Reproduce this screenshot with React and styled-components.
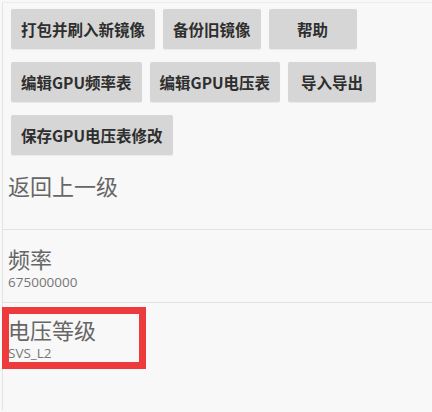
import styled, { createGlobalStyle } from 'styled-components';

const GlobalStyle = createGlobalStyle`
  html, body {
    margin: 0;
    background: #f8f8f8;
    font-family: "Noto Sans CJK SC", "Noto Sans", sans-serif;
  }
`;

const Page = styled.div`
  margin: 2px 0 0 2px;
  min-height: 408px;
  border-left: 1px solid #e3e3e3;
  border-top: 1px solid #ededed;
  box-sizing: border-box;
`;

const ButtonArea = styled.div`
  display: flex;
  flex-direction: column;
  gap: 13px;
  padding: 6px 0 0 8px;
`;

const ButtonRow = styled.div`
  display: flex;
  gap: 8px;
`;

const Button = styled.button`
  height: 40px;
  min-width: 88px;
  padding: 0 10px;
  border: none;
  border-radius: 2px;
  background: #d6d6d6;
  color: #2e2e2e;
  font-family: inherit;
  font-size: 15.5px;
  font-weight: 700;
  box-shadow: 0 1px 1px rgba(0, 0, 0, 0.06);
`;

const Item = styled.div`
  position: relative;
  padding: ${(p) => p.$pad || '13px 0 11px 5px'};
  border-bottom: ${(p) => (p.$last ? 'none' : '1px solid #e2e2e2')};
`;

const Title = styled.div`
  color: #666;
  font-size: 22px;
  line-height: 30px;
`;

const Value = styled.div`
  color: #777;
  font-family: "Open Sans", "Noto Sans", sans-serif;
  font-size: 13.5px;
  line-height: 18px;
`;

const Highlight = styled.div`
  position: absolute;
  left: -1px;
  top: 4px;
  width: 130px;
  height: 48px;
  border: 7px solid #ec3a3d;
  pointer-events: none;
`;

const rows = [
  ['打包并刷入新镜像', '备份旧镜像', '帮助'],
  ['编辑GPU频率表', '编辑GPU电压表', '导入导出'],
  ['保存GPU电压表修改'],
];

const App = () => (
  <>
    <GlobalStyle />
    <Page>
      <ButtonArea>
        {rows.map((row, i) => (
          <ButtonRow key={i}>
            {row.map((label) => (
              <Button key={label}>{label}</Button>
            ))}
          </ButtonRow>
        ))}
      </ButtonArea>
      <Item $pad="15px 0 29px 5px">
        <Title>返回上一级</Title>
      </Item>
      <Item>
        <Title>频率</Title>
        <Value>675000000</Value>
      </Item>
      <Item $last $pad="11px 0 11px 5px">
        <Title>电压等级</Title>
        <Value>SVS_L2</Value>
        <Highlight />
      </Item>
    </Page>
  </>
);

export default App;
